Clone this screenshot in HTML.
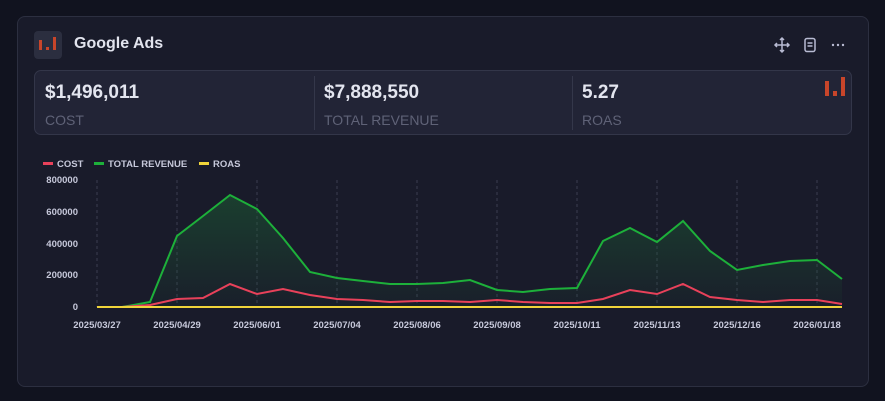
<!DOCTYPE html>
<html><head><meta charset="utf-8"><style>
body{margin:0;width:885px;height:401px;background:#11131f;font-family:"Liberation Sans",sans-serif;overflow:hidden}
.card{position:absolute;left:17px;top:16px;width:850px;height:369px;background:#191b2a;border:1px solid #2c2f40;border-radius:8px}
.logo{position:absolute;left:34px;top:31px;width:28px;height:28px;background:#2b2e3f;border-radius:4px}
.title{position:absolute;left:74px;top:35px;color:#e2e4ee;font-weight:bold;font-size:16px}
.stats{position:absolute;left:34px;top:70px;width:816px;height:63px;background:#222436;border:1px solid #333649;border-radius:7px}
.v{position:absolute;top:11px;color:#e3e5ef;font-weight:bold;font-size:19px}
.l{position:absolute;top:41px;color:#5f6277;font-size:14px}
.sep{position:absolute;top:5px;width:1px;height:54px;background:#34374a}
.ax{font-size:9.5px;fill:#c6c8da;font-weight:bold}
</style></head><body>
<div class="card"></div>
<div class="logo"><svg width="28" height="28"><rect x="5" y="9" width="3" height="10" fill="#c8452a"/><rect x="12" y="16" width="3" height="3" fill="#c8452a"/><rect x="19" y="6" width="3" height="13" fill="#c8452a"/></svg></div>
<div class="title">Google Ads</div>
<svg style="position:absolute;left:772px;top:35px" width="80" height="20" fill="none" stroke="#b8bbd3" stroke-width="1.5">
<path d="M10 3v14M3 10h14M8 5l2-2 2 2M8 15l2 2 2-2M5 8l-2 2 2 2M15 8l2 2-2 2"/>
<rect x="33" y="3.5" width="10" height="13" rx="2"/><path d="M35.5 8h5M35.5 11h5"/>
<g fill="#b8bbd3" stroke="none"><circle cx="61" cy="10" r="1.2"/><circle cx="66" cy="10" r="1.2"/><circle cx="71" cy="10" r="1.2"/></g>
</svg>
<div class="stats">
<div class="v" style="left:10px">$1,496,011</div><div class="l" style="left:10px">COST</div>
<div class="sep" style="left:279px"></div>
<div class="v" style="left:289px">$7,888,550</div><div class="l" style="left:289px">TOTAL REVENUE</div>
<div class="sep" style="left:537px"></div>
<div class="v" style="left:547px">5.27</div><div class="l" style="left:547px">ROAS</div>
<svg style="position:absolute;left:789px;top:5px" width="24" height="22"><rect x="1" y="5" width="4" height="15" fill="#c8452a"/><rect x="9" y="15" width="4" height="5" fill="#c8452a"/><rect x="17" y="1" width="4" height="19" fill="#c8452a"/></svg>
</div>
<svg style="position:absolute;left:0;top:0" width="885" height="401">
<defs><linearGradient id="g" x1="0" y1="0" x2="0" y2="1"><stop offset="0" stop-color="#1d6a35" stop-opacity=".45"/><stop offset="1" stop-color="#1d6a35" stop-opacity=".05"/></linearGradient></defs>
<rect x="43" y="162" width="10" height="3" fill="#e8415a"/><text x="57" y="167" class="ax">COST</text>
<rect x="94" y="162" width="10" height="3" fill="#1db03a"/><text x="108" y="167" class="ax">TOTAL REVENUE</text>
<rect x="199" y="162" width="10" height="3" fill="#f0d43a"/><text x="213" y="167" class="ax">ROAS</text>
<g class="ax" text-anchor="end"><text x="78" y="183">800000</text><text x="78" y="215">600000</text><text x="78" y="247">400000</text><text x="78" y="278">200000</text><text x="78" y="310">0</text></g>
<g stroke="#3a3d50" stroke-dasharray="3,3"><path d="M97 180V307M177 180V307M257 180V307M337 180V307M417 180V307M497 180V307M577 180V307M657 180V307M737 180V307M817 180V307"/></g>
<g class="ax" text-anchor="middle"><text x="97" y="328">2025/03/27</text><text x="177" y="328">2025/04/29</text><text x="257" y="328">2025/06/01</text><text x="337" y="328">2025/07/04</text><text x="417" y="328">2025/08/06</text><text x="497" y="328">2025/09/08</text><text x="577" y="328">2025/10/11</text><text x="657" y="328">2025/11/13</text><text x="737" y="328">2025/12/16</text><text x="817" y="328">2026/01/18</text></g>
<path d="M97 307L122 307L150 302L177 236L203 216L230 195L257 209L283 238L310 272L337 278L363 281L390 284L417 284L443 283L470 280L497 290L523 292L550 289L577 288L603 241L630 228L657 242L683 221L710 251L737 270L763 265L790 261L817 260L842 279L842 307Z" fill="url(#g)"/>
<path d="M97 307L122 307L150 302L177 236L203 216L230 195L257 209L283 238L310 272L337 278L363 281L390 284L417 284L443 283L470 280L497 290L523 292L550 289L577 288L603 241L630 228L657 242L683 221L710 251L737 270L763 265L790 261L817 260L842 279" fill="none" stroke="#1db03a" stroke-width="2"/>
<path d="M97 307L122 307L150 305L177 299L203 298L230 284L257 294L283 289L310 295L337 299L363 300L390 302L417 301L443 301L470 302L497 300L523 302L550 303L577 303L603 299L630 290L657 294L683 284L710 297L737 300L763 302L790 300L817 300L842 304" fill="none" stroke="#e8415a" stroke-width="2"/>
<path d="M97 307H842" stroke="#f0d43a" stroke-width="2"/>
</svg>
</body></html>
